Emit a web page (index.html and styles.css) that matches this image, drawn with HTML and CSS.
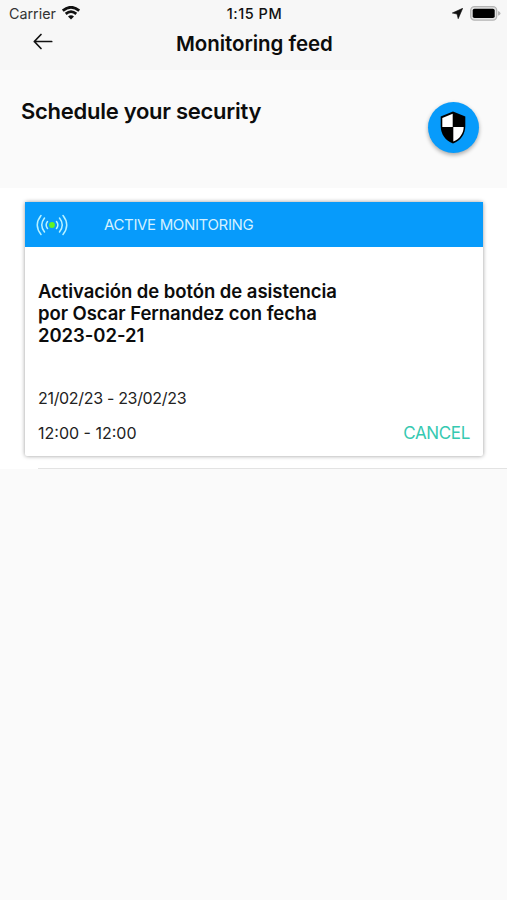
FILE: index.html
```html
<!DOCTYPE html>
<html lang="en">
<head>
<meta charset="utf-8">
<title>Monitoring feed</title>
<link rel="stylesheet" href="styles.css">
</head>
<body>
<header class="top">
  <div class="status">
    <div class="carrier"><span>Carrier</span>
      <svg width="18" height="14" viewBox="0 0 18 14" fill="none" stroke="#111" stroke-width="2.7"><path d="M.8 4.700Q9-2.200 17.200 4.700M3.700 7.900Q9 3.500 14.300 7.900"/><path d="M6 10.400Q9 8 12 10.400L9 13.500Z" fill="#111" stroke="none"/></svg>
    </div>
    <div class="clock">1:15 PM</div>
    <div class="power">
      <svg width="11" height="11" viewBox="0 0 11 11"><path d="M10.700.3 6.200 10.700 5 6 .3 5Z" fill="#111" stroke="#111" stroke-width=".6"/></svg>
      <svg width="31" height="15" viewBox="0 0 31 15"><rect x=".7" y=".7" width="26" height="13.400" rx="3.800" fill="#e2e2e2" stroke="#b4b4b4" stroke-width="1.300"/><rect x="2.700" y="2.700" width="22" height="9.400" rx="1.800"/><path d="M28 5q2.500 1 2.500 2.400T28 9.800Z" fill="#b4b4b4"/></svg>
    </div>
  </div>
  <nav class="nav">
    <svg width="20" height="17" viewBox="0 0 20 17" fill="none" stroke="#111" stroke-width="1.700" stroke-linecap="round" stroke-linejoin="round"><path d="M18.700 8.500H1.300M8 1.500 1.300 8.500 8 15.500"/></svg>
    <h1>Monitoring feed</h1>
  </nav>
</header>
<section class="intro">
  <h2>Schedule your security</h2>
  <button class="shield" aria-label="Security">
    <svg width="26" height="33" viewBox="0 0 26 33"><path d="M13 .4 25.300 5.400V15C25.300 23 20.500 30 13 32.500 5.500 30 .7 23 .7 15V5.400Z"/><path d="M12.700 2.700V16H2.300V6.900Z" fill="#fff"/><path d="M13.300 16H23.700C23.500 22.500 19.500 28.200 13.300 30.600Z" fill="#fff"/></svg>
  </button>
</section>
<main class="feed">
  <article class="card">
    <div class="banner">
      <svg width="32" height="22" viewBox="0 0 32 22" fill="none" stroke="#b9f2ff" stroke-width="1.500" stroke-linecap="round"><path d="M5 1.500Q-2.500 11 5 20.500M8.500 4Q3 11 8.500 18M11.500 7.500Q8.800 11 11.500 14.500M27 1.500Q34.500 11 27 20.500M23.500 4Q29 11 23.500 18M20.500 7.500Q23.200 11 20.500 14.500"/><circle cx="16" cy="11" r="2.900" fill="#62f423" stroke="none"/></svg>
      <span>ACTIVE MONITORING</span>
    </div>
    <div class="body">
      <h3>Activación de botón de asistencia<br>por Oscar Fernandez con fecha<br>2023-02-21</h3>
      <p class="date">21/02/23 - 23/02/23</p>
      <div class="row"><p>12:00 - 12:00</p><button class="cancel">CANCEL</button></div>
    </div>
  </article>
</main>
</body>
</html>
```
FILE: styles.css
```css
* { box-sizing: border-box; margin: 0; padding: 0; }
body { background: #fafafa; color: #0c0c0c; font-family: Inter, "Liberation Sans", sans-serif; min-height: 900px; }
svg { display: block; flex: none; }
button { border: 0; background: none; font: inherit; }
span, h1, h2, p { white-space: nowrap; }
.top { height: 70px; background: #f7f7f7; }
.status { height: 27px; padding: 0 6px 0 9px; display: grid; grid-template-columns: 1fr auto 1fr; align-items: center; }
.carrier { display: flex; gap: 6px; align-items: center; font-size: 14.3px; color: #333; }
.carrier svg { margin-top: -1px; }
.clock { font-size: 14.5px; font-weight: 500; letter-spacing: .5px; color: #111; margin-left: -1px; }
.power { display: flex; gap: 7px; align-items: center; justify-content: flex-end; }
.nav { height: 43px; display: grid; grid-template-columns: 143px 1fr; padding-left: 33px; }
.nav svg { margin-top: 6px; }
h1 { font-size: 20.5px; line-height: 24px; font-weight: 600; letter-spacing: -.05px; margin-top: 5px; }
.intro { height: 118px; display: flex; justify-content: space-between; padding: 28px 28px 0 21px; }
h2 { font-size: 22px; line-height: 26px; font-weight: 600; letter-spacing: -.27px; }
.shield { width: 51px; height: 51px; margin-top: 4px; border-radius: 50%; background: #079bfb; display: grid; place-items: center; box-shadow: 0 2px 4px #0005; }
.shield svg { margin-left: -1px; }
.feed { height: 281px; background: #fff; padding: 14px 24px 0 25px; display: flex; flex-direction: column; justify-content: space-between; }
.feed::after { content: ""; height: 1px; background: #e3e3e3; margin: 0 -24px 0 13px; }
.card { height: 254px; background: #fff; box-shadow: 0 0 4px #0006; border-radius: 2px; }
.banner { height: 45px; background: #079bfb; color: #d3f1ff; display: flex; align-items: center; gap: 36px; padding-left: 11px; font-size: 15px; letter-spacing: -.35px; }
.body { padding: 33px 13px 0; }
h3 { font-size: 18.5px; line-height: 22px; font-weight: 600; letter-spacing: -.06px; }
.date { margin-top: 42px; font-size: 16px; line-height: 20px; letter-spacing: -.32px; color: #222; }
.row { margin-top: 15px; display: flex; justify-content: space-between; font-size: 16px; line-height: 20px; color: #222; }
.cancel { color: #36c9b1; font-size: 17px; line-height: 20px; letter-spacing: -.35px; }
```
